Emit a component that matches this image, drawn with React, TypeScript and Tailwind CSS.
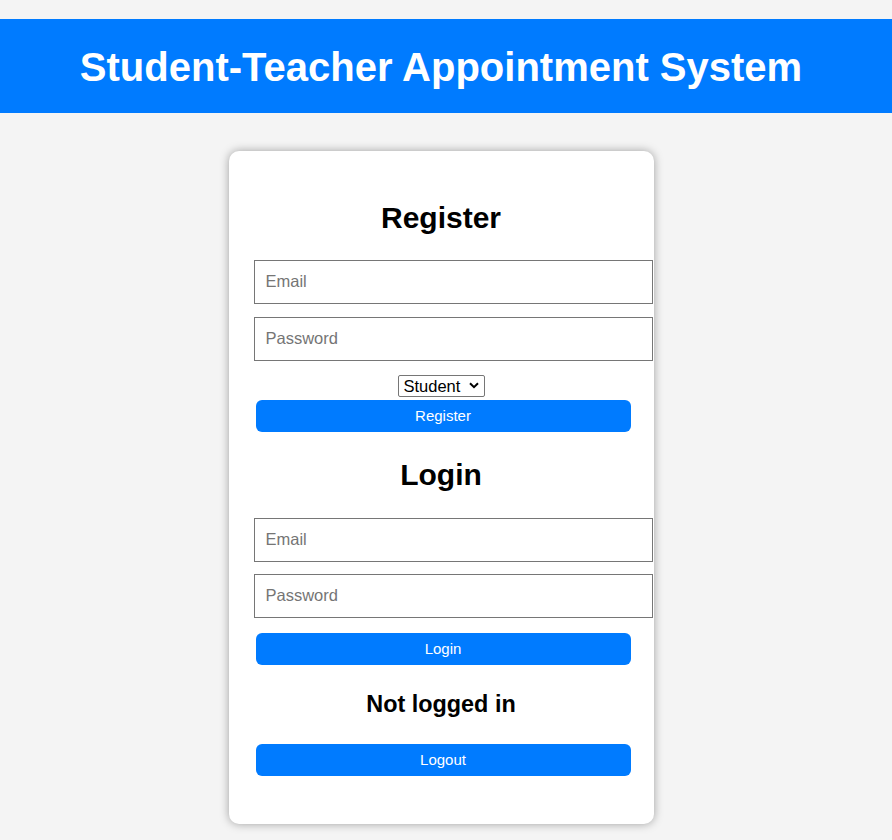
import React from "react";

const font = { fontFamily: '"Liberation Sans", Arial, sans-serif' };

function Field({ placeholder, type = "text" }: { placeholder: string; type?: string }) {
  return (
    <input
      type={type}
      placeholder={placeholder}
      className="block w-[399px] h-[44px] border border-[#767676] bg-white px-[11px] pb-[2px] text-[16.5px] text-black placeholder:text-[#757575] outline-none"
      style={font}
    />
  );
}

function Btn({ children }: { children: React.ReactNode }) {
  return (
    <button
      className="block ml-[2px] w-[375px] h-[32px] rounded-[6px] bg-[#007bff] text-white text-[15px] leading-[32px] text-center"
      style={font}
    >
      {children}
    </button>
  );
}

export default function App() {
  return (
    <div className="min-h-[840px] bg-[#f4f4f4] pt-[19px] pb-[16px]" style={font}>
      <header className="h-[94px] bg-[#007bff]">
        <div className="w-[882px] h-full flex items-center justify-center">
          <h1 className="text-white font-bold text-[40px] leading-[46px] mt-[1px]">
            Student-Teacher Appointment System
          </h1>
        </div>
      </header>

      <div className="w-[882px]">
        <div className="mx-auto mt-[38px] w-[425px] h-[673px] rounded-[10px] bg-white px-[25px] pt-[25px] shadow-[0_0_10px_rgba(0,0,0,0.35)]">
          <h2 className="mt-[24px] h-[36px] leading-[36px] text-center font-bold text-[30px] text-black">
            Register
          </h2>
          <div className="mt-[24px]">
            <Field placeholder="Email" />
          </div>
          <div className="mt-[13px]">
            <Field placeholder="Password" type="password" />
          </div>
          <div className="mt-[14px] flex justify-center">
            <div className="relative w-[87px] h-[22px]">
              <select
                className="appearance-none block h-[22px] w-[87px] border border-[#767676] rounded-[2px] bg-white text-[16.5px] leading-[20px] text-black pl-[5px] pr-[20px]"
                style={font}
                defaultValue="student"
              >
                <option value="student">Student</option>
                <option value="teacher">Teacher</option>
              </select>
              <svg
                className="pointer-events-none absolute right-[6px] top-[7px]"
                width="10"
                height="7"
                viewBox="0 0 10 7"
              >
                <path d="M1 1.2 L5 5.2 L9 1.2" fill="none" stroke="#000" strokeWidth="2" />
              </svg>
            </div>
          </div>
          <div className="mt-[3px]">
            <Btn>Register</Btn>
          </div>

          <h2 className="mt-[25px] h-[36px] leading-[36px] text-center font-bold text-[30px] text-black">
            Login
          </h2>
          <div className="mt-[25px]">
            <Field placeholder="Email" />
          </div>
          <div className="mt-[12px]">
            <Field placeholder="Password" type="password" />
          </div>
          <div className="mt-[15px]">
            <Btn>Login</Btn>
          </div>

          <h3 className="mt-[25px] h-[28px] leading-[28px] text-center font-bold text-[23.4px] text-black">
            Not logged in
          </h3>
          <div className="mt-[26px]">
            <Btn>Logout</Btn>
          </div>
        </div>
      </div>
    </div>
  );
}
